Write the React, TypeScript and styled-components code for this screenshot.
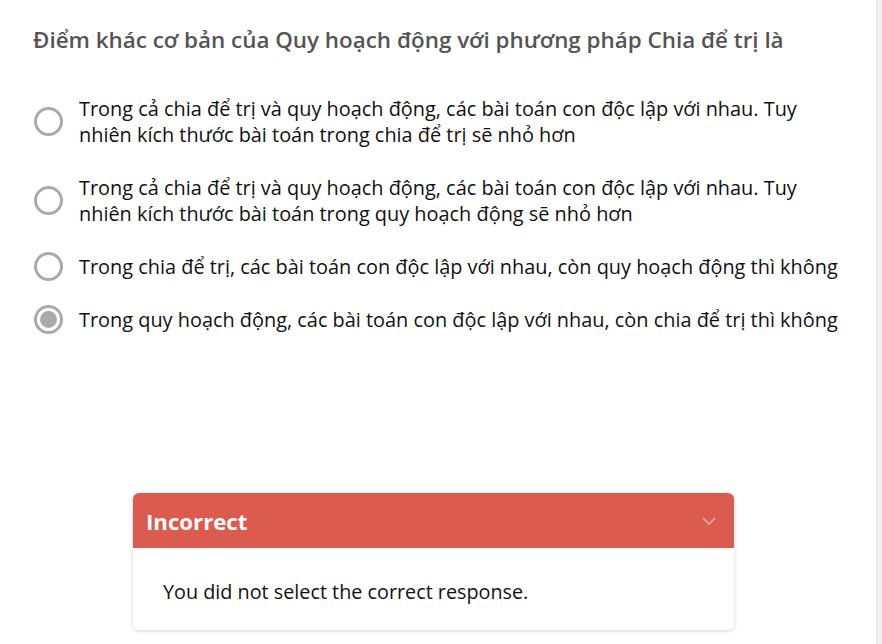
import React from 'react';
import styled, { createGlobalStyle } from 'styled-components';

const GlobalStyle = createGlobalStyle`
  html, body {
    margin: 0;
    padding: 0;
    background: #ffffff;
  }
  body {
    font-family: 'Open Sans', 'Noto Sans', sans-serif;
  }
`;

const StyledPage = styled.div`
  display: flex;
  width: 882px;
  height: 644px;
  overflow: hidden;
`;

const StyledContent = styled.div`
  flex: 1 1 auto;
  display: flex;
  flex-direction: column;
  padding: 25px 33px 0 33px;
`;

const StyledScrollTrack = styled.div`
  flex: 0 0 5px;
  background: #f1f1f1;
  border-left: 1px solid #e6e6e6;
`;

const StyledQuestion = styled.div`
  font-size: 22.4px;
  line-height: 30px;
  font-weight: 600;
  color: #555555;
  margin-bottom: 27px;
`;

const StyledOptionList = styled.div`
  display: flex;
  flex-direction: column;
`;

const StyledOption = styled.label`
  display: flex;
  align-items: center;
  gap: 16px;
  padding: 13.5px 0;
  cursor: pointer;
`;

const StyledRadio = styled.span<{ $checked?: boolean }>`
  position: relative;
  flex: 0 0 auto;
  width: 23px;
  height: 23px;
  border: 3px solid #aaaaaa;
  border-radius: 50%;
  margin: -1.5px 0 -1.5px 1px;

  &::after {
    content: '';
    display: ${({ $checked }) => ($checked ? 'block' : 'none')};
    position: absolute;
    top: 3px;
    left: 3px;
    width: 17px;
    height: 17px;
    border-radius: 50%;
    background: #aaaaaa;
  }
`;

const StyledOptionText = styled.span`
  font-size: 19.9px;
  line-height: 26px;
  color: #111111;
`;

const StyledFeedback = styled.div`
  width: 601px;
  margin: 147px 0 0 100px;
  border-radius: 6px;
  background: #ffffff;
  box-shadow: 0 1px 4px rgba(0, 0, 0, 0.18);
  overflow: hidden;
`;

const StyledFeedbackHeader = styled.div`
  display: flex;
  align-items: center;
  justify-content: space-between;
  height: 55px;
  padding: 1px 18px 0 13px;
  box-sizing: border-box;
  background: #dc5b4f;
`;

const StyledFeedbackTitle = styled.span`
  font-size: 22.2px;
  font-weight: 700;
  color: #ffffff;
`;

const StyledFeedbackBody = styled.div`
  padding: 31px 30px 25px 30px;
  font-size: 19.8px;
  line-height: 26px;
  color: #111111;
`;

const options = [
  'Trong cả chia để trị và quy hoạch động, các bài toán con độc lập với nhau. Tuy nhiên kích thước bài toán trong chia để trị sẽ nhỏ hơn',
  'Trong cả chia để trị và quy hoạch động, các bài toán con độc lập với nhau. Tuy nhiên kích thước bài toán trong quy hoạch động sẽ nhỏ hơn',
  'Trong chia để trị, các bài toán con độc lập với nhau, còn quy hoạch động thì không',
  'Trong quy hoạch động, các bài toán con độc lập với nhau, còn chia để trị thì không',
];

const selected = 3;

const App = () => {
  return (
    <>
      <GlobalStyle />
      <StyledPage>
        <StyledContent>
          <StyledQuestion>
            Điểm khác cơ bản của Quy hoạch động với phương pháp Chia để trị là
          </StyledQuestion>
          <StyledOptionList>
            {options.map((text, i) => (
              <StyledOption key={i}>
                <StyledRadio $checked={i === selected} />
                <StyledOptionText>{text}</StyledOptionText>
              </StyledOption>
            ))}
          </StyledOptionList>
          <StyledFeedback>
            <StyledFeedbackHeader>
              <StyledFeedbackTitle>Incorrect</StyledFeedbackTitle>
              <svg width="14" height="8" viewBox="0 0 14 8" fill="none">
                <path d="M1 1l6 6 6-6" stroke="rgba(255,255,255,0.55)" strokeWidth="1.3" />
              </svg>
            </StyledFeedbackHeader>
            <StyledFeedbackBody>You did not select the correct response.</StyledFeedbackBody>
          </StyledFeedback>
        </StyledContent>
        <StyledScrollTrack />
      </StyledPage>
    </>
  );
};

export default App;
